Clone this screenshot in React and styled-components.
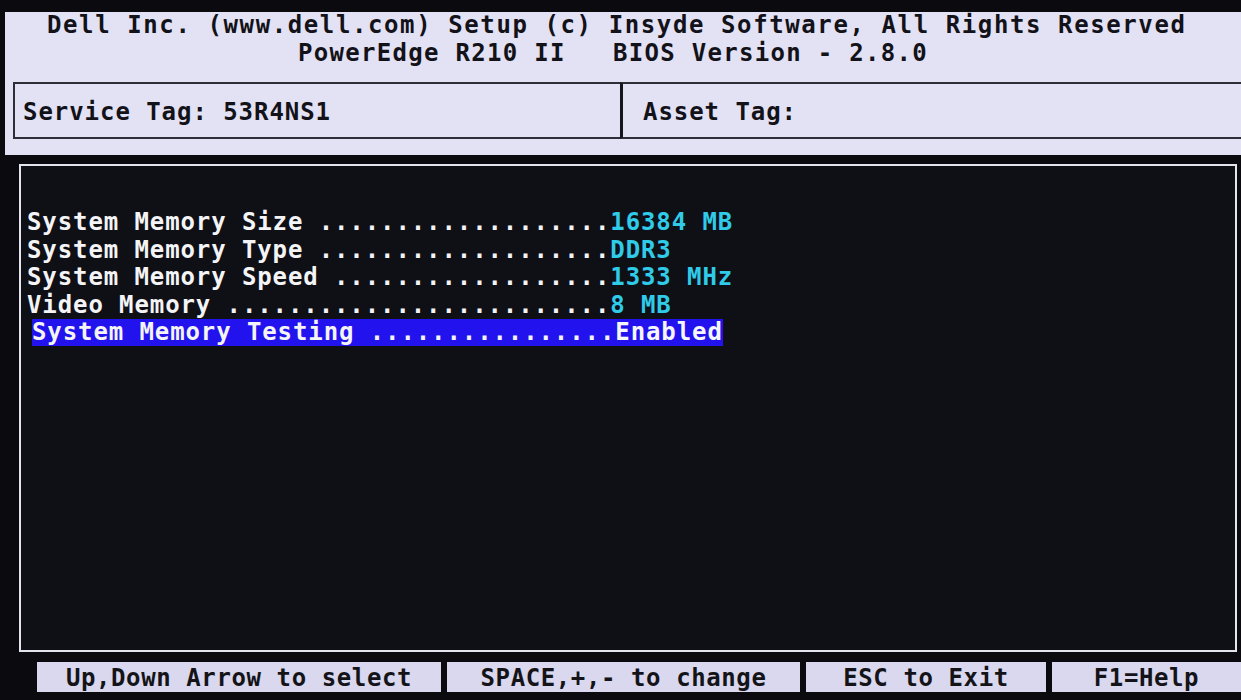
import React from "react";
import styled, { createGlobalStyle } from "styled-components";

const GlobalStyle = createGlobalStyle`
  html, body {
    margin: 0;
    padding: 0;
    background: #09090d;
  }
  * {
    box-sizing: border-box;
  }
`;

const LABEL_CELLS = 38;

const memoryRows = [
  { label: "System Memory Size", value: "16384 MB" },
  { label: "System Memory Type", value: "DDR3" },
  { label: "System Memory Speed", value: "1333 MHz" },
  { label: "Video Memory", value: "8 MB" },
  { label: "System Memory Testing", value: "Enabled", selected: true },
];

const keys = [
  { text: "Up,Down Arrow to select", width: 404 },
  { text: "SPACE,+,- to change", width: 353 },
  { text: "ESC to Exit", width: 240 },
  { text: "F1=Help" },
];

function dotted(label) {
  return label + " " + ".".repeat(LABEL_CELLS - label.length - 1);
}

export default function App() {
  return (
    <>
      <GlobalStyle />
      <Screen>
        <Header>
          <TitleLine indent={42} spacing={1.6}>
            Dell Inc. (www.dell.com) Setup (c) Insyde Software, All Rights Reserved
          </TitleLine>
          <TitleLine indent={293} spacing={1.3} second>
            {"PowerEdge R210 II   BIOS Version - 2.8.0"}
          </TitleLine>
          <TagRow>
            <TagBox width={607}>Service Tag: 53R4NS1</TagBox>
            <TagBox asset>Asset Tag:</TagBox>
          </TagRow>
        </Header>

        <Panel>
          {memoryRows.map((row) => (
            <Row key={row.label}>
              <RowText selected={row.selected}>
                <span>{dotted(row.label)}</span>
                <Value selected={row.selected}>{row.value}</Value>
              </RowText>
            </Row>
          ))}
        </Panel>

        <Footer>
          {keys.map((k) => (
            <KeyBox key={k.text} width={k.width}>
              {k.text}
            </KeyBox>
          ))}
        </Footer>
      </Screen>
    </>
  );
}

const biosFont = `
  font-family: "DejaVu Sans Mono", "Liberation Mono", monospace;
  font-weight: bold;
  font-size: 24px;
  white-space: pre;
`;

const Screen = styled.div`
  width: 1241px;
  height: 700px;
  overflow: hidden;
  background: #0a0a0f;
  padding-top: 12px;
  display: flex;
  flex-direction: column;
`;

const Header = styled.header`
  margin-left: 5px;
  height: 143px;
  background: #e3e1f4;
  color: #121218;
  display: flex;
  flex-direction: column;
`;

const TitleLine = styled.div`
  ${biosFont}
  height: 26px;
  line-height: 26px;
  padding-left: ${(p) => p.indent}px;
  letter-spacing: ${(p) => p.spacing}px;
  margin-top: ${(p) => (p.second ? 2 : 0)}px;
`;

const TagRow = styled.div`
  display: flex;
  margin-top: 16px;
  height: 57px;
`;

const TagBox = styled.div`
  ${biosFont}
  letter-spacing: 0.95px;
  display: flex;
  align-items: center;
  border-top: 2px solid #2e2e38;
  border-bottom: 2px solid #2e2e38;
  border-left: ${(p) => (p.asset ? "3px solid #15151c" : "2px solid #2e2e38")};
  margin-left: ${(p) => (p.asset ? 0 : 8)}px;
  width: ${(p) => (p.width ? `${p.width}px` : "auto")};
  flex: ${(p) => (p.width ? "none" : 1)};
  padding-left: ${(p) => (p.asset ? 20 : 8)}px;
  padding-top: 2px;
`;

const Panel = styled.main`
  margin: 9px 4px 0 19px;
  height: 488px;
  border: 2px solid #e4e4ee;
  background: #0f0f16;
  padding: 43px 0 0 6px;
`;

const Row = styled.div`
  height: 27.5px;
  display: flex;
  align-items: center;
`;

const RowText = styled.div`
  ${biosFont}
  letter-spacing: 0.9px;
  line-height: 27px;
  height: 27px;
  color: #f4f4f6;
  background: ${(p) => (p.selected ? "#2212ee" : "transparent")};
  margin-left: ${(p) => (p.selected ? 5 : 0)}px;
`;

const Value = styled.span`
  color: ${(p) => (p.selected ? "#f6f6ff" : "#2fcbe8")};
`;

const Footer = styled.footer`
  display: flex;
  gap: 6px;
  margin: 10px 0 0 37px;
  height: 30px;
`;

const KeyBox = styled.div`
  ${biosFont}
  letter-spacing: 0.6px;
  background: #d9d8ee;
  color: #141418;
  width: ${(p) => (p.width ? `${p.width}px` : "auto")};
  flex: ${(p) => (p.width ? "none" : 1)};
  display: flex;
  align-items: center;
  justify-content: center;
  padding-top: 2px;
`;
